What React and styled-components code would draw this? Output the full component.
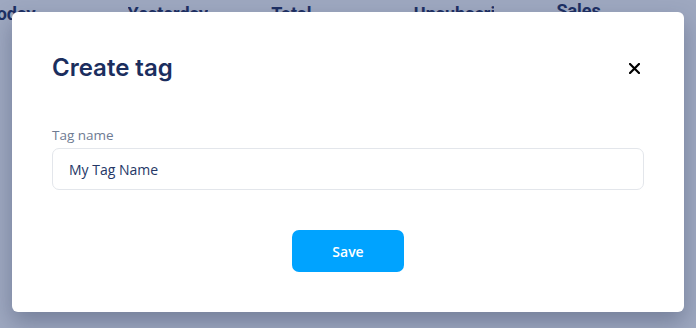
import styled, { createGlobalStyle } from "styled-components";

const GlobalStyle = createGlobalStyle`
    html, body {
        margin: 0;
        padding: 0;
        height: 100%;
    }
    body {
        background: #9ea8c0;
        overflow: hidden;
    }
`;

const PageWrapper = styled.div`
    position: relative;
    width: 696px;
    height: 328px;
    overflow: hidden;
    background: #9ea8c0;
`;

// Stats header of the page behind the overlay
const StatsHeader = styled.div`
    display: flex;
    margin-left: -13px;
`;

const StatsCell = styled.div`
    width: ${({ width }) => width}px;
    padding-top: ${({ top }) => top}px;
    font-family: Roboto, "Liberation Sans", sans-serif;
    font-weight: 700;
    font-size: 18px;
    line-height: 20px;
    color: #1d2f63;
    white-space: nowrap;
`;

const StatsLabel = styled.span`
    display: inline-block;
    max-width: ${({ clip }) => (clip ? `${clip}px` : "none")};
    overflow: hidden;
    vertical-align: top;
`;

const Overlay = styled.div`
    position: absolute;
    inset: 0;
    display: flex;
    align-items: flex-start;
    justify-content: center;
    padding-top: 12px;
`;

const Modal = styled.div`
    display: flex;
    flex-direction: column;
    box-sizing: border-box;
    width: 672px;
    padding: 40px;
    background: #ffffff;
    border-radius: 6px;
    box-shadow: 0 10px 22px rgba(40, 52, 84, 0.35);
`;

const ModalHeader = styled.div`
    display: flex;
    align-items: center;
    justify-content: space-between;
    height: 32px;
`;

const ModalTitle = styled.h2`
    margin: 0;
    font-family: Inter, "Noto Sans", sans-serif;
    font-weight: 600;
    font-size: 24px;
    line-height: 32px;
    color: #1b2e5e;
`;

const CloseButton = styled.button`
    display: flex;
    align-items: center;
    justify-content: center;
    width: 20px;
    height: 20px;
    padding: 0;
    border: none;
    background: none;
    cursor: pointer;
`;

const FieldLabel = styled.label`
    display: block;
    margin-top: 42px;
    font-family: "Open Sans", sans-serif;
    font-size: 13.5px;
    line-height: 18px;
    color: #6e7b93;
`;

const TextInput = styled.input`
    box-sizing: border-box;
    width: 100%;
    height: 42px;
    margin-top: 4px;
    padding: 0 16px;
    border: 1px solid #e3e6eb;
    border-radius: 7px;
    font-family: "Open Sans", sans-serif;
    font-size: 14px;
    color: #253766;
    outline: none;
`;

const Actions = styled.div`
    display: flex;
    justify-content: center;
    margin-top: 40px;
`;

const SaveButton = styled.button`
    width: 112px;
    height: 42px;
    border: none;
    border-radius: 7px;
    background: #00a3ff;
    color: #ffffff;
    font-family: "Open Sans", sans-serif;
    font-weight: 600;
    font-size: 14px;
    cursor: pointer;
`;

const stats = [
    { label: "Today", width: 141, top: 4 },
    { label: "Yesterday", width: 144, top: 4 },
    { label: "Total", width: 143, top: 4 },
    { label: "Unsubscribed", width: 143, top: 4, clip: 80 },
    { label: "Sales", width: 140, top: 1 },
];

export default function App() {
    return (
        <PageWrapper>
            <GlobalStyle />
            <StatsHeader>
                {stats.map((s) => (
                    <StatsCell key={s.label} width={s.width} top={s.top}>
                        <StatsLabel clip={s.clip}>{s.label}</StatsLabel>
                    </StatsCell>
                ))}
            </StatsHeader>
            <Overlay>
                <Modal>
                    <ModalHeader>
                        <ModalTitle>Create tag</ModalTitle>
                        <CloseButton aria-label="Close">
                            <svg width="11" height="11" viewBox="0 0 11 11">
                                <path d="M1 1 L10 10 M10 1 L1 10" stroke="#000" strokeWidth="2.2" strokeLinecap="square" />
                            </svg>
                        </CloseButton>
                    </ModalHeader>
                    <FieldLabel htmlFor="tag-name">Tag name</FieldLabel>
                    <TextInput id="tag-name" defaultValue="My Tag Name" />
                    <Actions>
                        <SaveButton>Save</SaveButton>
                    </Actions>
                </Modal>
            </Overlay>
        </PageWrapper>
    );
}
